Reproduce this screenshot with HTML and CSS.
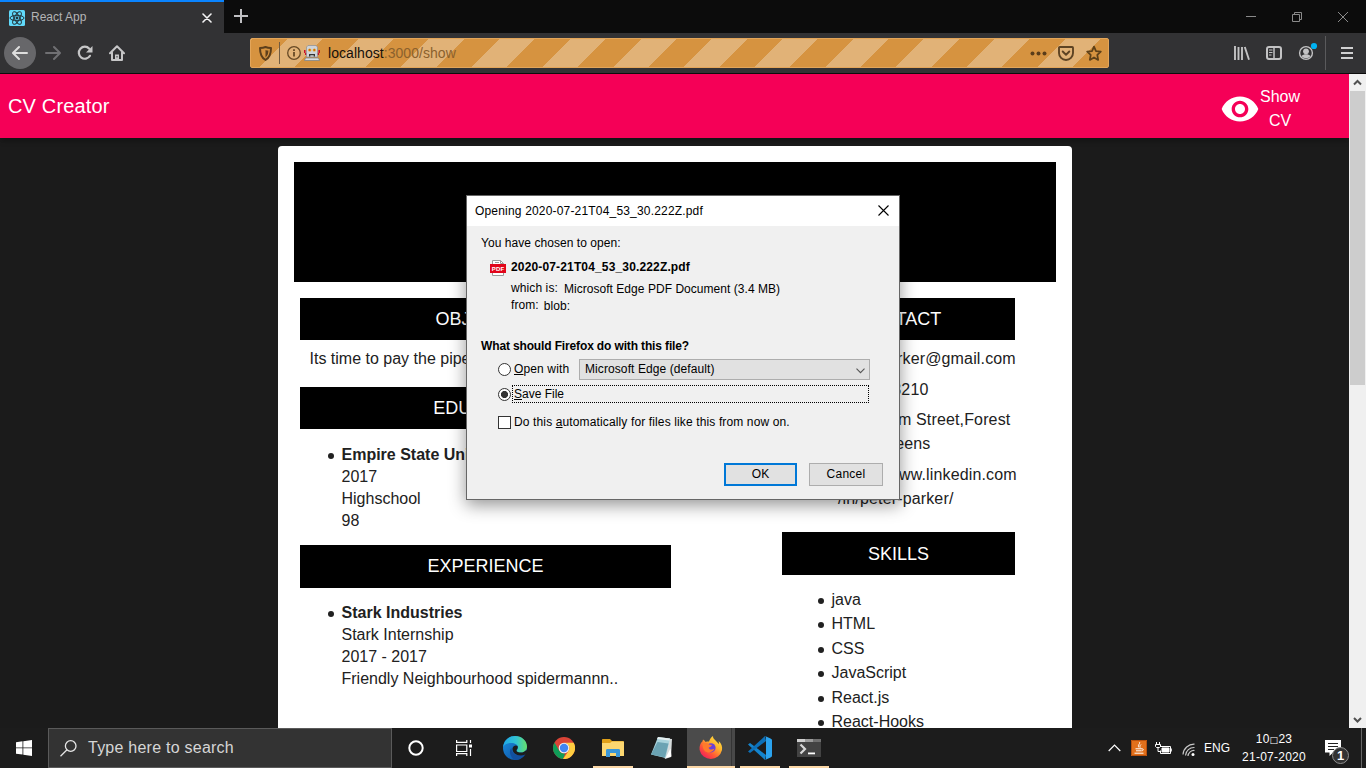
FILE: index.html
```html
<!DOCTYPE html>
<html lang="en">
<head>
<meta charset="utf-8">
<title>React App</title>
<link rel="stylesheet" href="styles.css">
</head>
<body>
<div class="screen">
  <header class="tabstrip">
    <div class="tab">
      <svg class="favicon" width="16" height="16" viewBox="0 0 16 16"><rect width="16" height="16" rx="1.5" fill="#61dafb"/><g fill="none" stroke="#22363d" stroke-width="1"><ellipse cx="8" cy="8" rx="7" ry="2.7"/><ellipse cx="8" cy="8" rx="7" ry="2.7" transform="rotate(60 8 8)"/><ellipse cx="8" cy="8" rx="7" ry="2.7" transform="rotate(120 8 8)"/></g><circle cx="8" cy="8" r="1.4" fill="#22363d"/></svg>
      <span class="tab-title">React App</span>
      <svg class="tab-close" width="10" height="10" viewBox="0 0 10 10"><path d="M1 1l8 8M9 1l-8 8" stroke="#f4f4f5" stroke-width="1.6" stroke-linecap="round"/></svg>
    </div>
    <svg class="newtab" width="14" height="14" viewBox="0 0 14 14"><path d="M7 0v14M0 7h14" stroke="#c0c0c3" stroke-width="2"/></svg>
    <div class="wincontrols">
      <svg width="10" height="10" viewBox="0 0 10 10"><path d="M0 4.5h10" stroke="#8a8a8a"/></svg>
      <svg width="10" height="10" viewBox="0 0 10 10" fill="none" stroke="#8a8a8a"><path d="M.5 2.5h7v7h-7zM2.5 2.500v-2h7v7h-2"/></svg>
      <svg width="10" height="10" viewBox="0 0 10 10"><path d="M0 0l10 10M10 0L0 10" stroke="#8a8a8a"/></svg>
    </div>
  </header>

  <div class="toolbar">
    <div class="back"><svg width="16" height="16" viewBox="0 0 16 16" fill="none" stroke="#dedede" stroke-width="2" stroke-linecap="round" stroke-linejoin="round"><path d="M15 8H1.500M7 2L1 8l6 6"/></svg></div>
    <svg class="fwd" width="16" height="16" viewBox="0 0 16 16" fill="none" stroke="#707073" stroke-width="2" stroke-linecap="round" stroke-linejoin="round"><path d="M1 8h13.500M9 2l6 6-6 6"/></svg>
    <svg class="reload" width="16" height="16" viewBox="0 0 16 16"><path d="M13 10.800A6 6 0 1 1 12.300 3.700" fill="none" stroke="#c6c6c7" stroke-width="2.200" stroke-linecap="round"/><path d="M15.500 1v6.500H9z" fill="#c6c6c7"/></svg>
    <svg class="home" width="16" height="16" viewBox="0 0 16 16"><path d="M1 8.300L8 1.300l7 7M3 7.500V15h10V7.500" fill="none" stroke="#c6c6c7" stroke-width="2" stroke-linejoin="round" stroke-linecap="round"/><path d="M6 9.500h4V15H6z" fill="#c6c6c7"/><path d="M7.500 11h1v1.500h-1z" fill="#323234"/></svg>
    <div class="urlbar">
      <svg class="shield" width="13" height="15" viewBox="0 0 13 15"><path d="M6.500 1C4.500 1.900 2.800 2 1 2c0 6 1 9.500 5.500 12C11 11.500 12 8 12 2c-1.800 0-3.500-.1-5.500-1z" fill="none" stroke="#5d3f1b" stroke-width="2" stroke-linejoin="round"/><path d="M6.500 4v7.400C9 9.500 9.300 7 9.400 4.500 8.300 4.500 7.500 4.400 6.500 4z" fill="#5d3f1b"/></svg>
      <span class="sep"></span>
      <svg class="info" width="14" height="14" viewBox="0 0 14 14"><circle cx="7" cy="7" r="6.300" fill="none" stroke="#674925" stroke-width="1.300"/><path d="M7 6v4.500M7 3.200v1.700" stroke="#674925" stroke-width="1.800"/></svg>
      <svg class="robot" width="16" height="16" viewBox="0 0 16 16"><path d="M0 5h1.500v3H3v2H1V8H0zM16 5h-1.500v3H13v2h2V8h1z" fill="#c8102e"/><path d="M4 .5h8l1.500 1.500v10h-11V2z" fill="#cfd3d8" stroke="#8a8e96" stroke-width=".7"/><circle cx="5.700" cy="5" r="1.600" fill="#e9a21c"/><circle cx="10.300" cy="5" r="1.600" fill="#e9a21c"/><path d="M5.200 4.500h1v1h-1zM9.800 4.500h1v1h-1z" fill="#a01010"/><path d="M5 9h6v2.500h-1.300v-1.200H6.300v1.200H5z" fill="#333"/><path d="M1.500 13h13l1 2.500H.5z" fill="#dadde0" stroke="#777c85" stroke-width=".7"/></svg>
      <span class="url"><b>localhost</b>:3000/show</span>
      <svg class="dots" width="17" height="5" viewBox="0 0 17 5" fill="#5a3d1a"><circle cx="2.500" cy="2.500" r="2"/><circle cx="8.500" cy="2.500" r="2"/><circle cx="14.500" cy="2.500" r="2"/></svg>
      <svg class="pocket" width="16" height="15" viewBox="0 0 16 15" fill="none" stroke="#5d4323" stroke-width="1.900" stroke-linecap="round" stroke-linejoin="round"><path d="M1.800 1h12.400a.8.8 0 0 1 .8.800V7A7 7 0 0 1 1 7V1.800A.8.800 0 0 1 1.800 1z"/><path d="M4.700 5.500L8 8.700l3.300-3.200"/></svg>
      <svg class="star" width="16" height="17" viewBox="0 0 17 17" fill="none" stroke="#5d4018" stroke-width="1.900" stroke-linejoin="round"><path d="M8.500 1.200l2.100 4.700 5.100.6-3.700 3.500.9 5.300-4.400-2.600-4.400 2.600.9-5.300L1.300 6.500l5.100-.6z"/></svg>
    </div>
    <svg class="library" width="16" height="14" viewBox="0 0 16 14" stroke="#c3c3c4" stroke-width="2"><path d="M1 0v14M4.500 1v13M8 1v13M10.800 1l4.200 12.700" stroke-width="1.900"/></svg>
    <svg class="sidebar" width="16" height="14" viewBox="0 0 16 14" fill="none" stroke="#c3c3c4"><rect x="1" y="1" width="14" height="12" rx="2" stroke-width="2"/><path d="M8 1v12" stroke-width="1.500"/><path d="M3 4h3.500M3 6.500h3.500M3 9h2.500"/></svg>
    <svg class="account" width="20" height="20" viewBox="0 0 20 20"><circle cx="8" cy="11" r="6.400" fill="none" stroke="#c3c3c4" stroke-width="1.400"/><circle cx="8" cy="9.300" r="2.900" fill="#c3c3c4"/><path d="M3.500 14c2-2.300 7-2.300 9 0-2 3-7 3-9 0z" fill="#c3c3c4"/><circle cx="16" cy="4" r="3.100" fill="#00b3f4"/></svg>
    <span class="tsep"></span>
    <svg class="burger" width="12" height="12" viewBox="0 0 12 12"><path d="M0 1h12M0 6h12M0 11h12" stroke="#d0d0d1" stroke-width="2"/></svg>
  </div>

  <div class="viewport">
    <div class="page">
      <nav class="appbar">
        <span class="brand">CV Creator</span>
        <svg width="40" height="40" viewBox="0 0 24 24" fill="#fff"><path d="M12 4.500C7 4.500 2.730 7.610 1 12c1.730 4.390 6 7.500 11 7.500s9.270-3.110 11-7.500c-1.730-4.390-6-7.500-11-7.500zM12 17c-2.760 0-5-2.240-5-5s2.240-5 5-5 5 2.240 5 5-2.240 5-5 5zm0-8c-1.660 0-3 1.340-3 3s1.340 3 3 3 3-1.340 3-3-1.340-3-3-3z"/></svg>
        <span class="show">Show CV</span>
      </nav>
      <main class="card">
        <div class="banner"></div>
        <div class="columns">
          <div class="left">
            <h2>OBJECTIVE</h2>
            <p class="objective">Its time to pay the piper</p>
            <h2>EDUCATION</h2>
            <ul class="entries edu"><li><strong>Empire State University</strong><br>2017<br>Highschool<br>98</li></ul>
            <h2 class="tall">EXPERIENCE</h2>
            <ul class="entries"><li><strong>Stark Industries</strong><br>Stark Internship<br>2017 - 2017<br>Friendly Neighbourhood spidermannn..</li></ul>
          </div>
          <div class="right">
            <h2>CONTACT</h2>
            <div class="contact">
              <p>peter.parker@gmail.com</p>
              <p>9876543210</p>
              <p>20 Ingram Street,Forest<br>Hills,Queens</p>
              <p>https://www.linkedin.com<br>/in/peter-parker/</p>
            </div>
            <h2 class="tall low">SKILLS</h2>
            <ul class="skills"><li>java</li><li>HTML</li><li>CSS</li><li>JavaScript</li><li>React.js</li><li>React-Hooks</li></ul>
          </div>
        </div>
      </main>
    </div>
    <div class="scrollbar">
      <svg width="17" height="17" viewBox="0 0 17 17"><path d="M5 10.500L8.500 7l3.500 3.500" fill="none" stroke="#505050" stroke-width="2"/></svg>
      <div class="thumb"></div>
      <svg class="down" width="17" height="17" viewBox="0 0 17 17"><path d="M5 7l3.500 3.500L12 7" fill="none" stroke="#505050" stroke-width="2"/></svg>
    </div>
  </div>

  <footer class="taskbar">
    <div class="start"><svg width="16" height="16" viewBox="0 0 16 16" fill="#fff"><path d="M0 2.200l6.500-.9v6.200H0zM7.300 1.200L16 0v7.500H7.300zM0 8.300h6.500v6.300L0 13.700zM7.300 8.300H16V16l-8.700-1.200z"/></svg></div>
    <div class="search">
      <svg width="17" height="17" viewBox="0 0 17 17" fill="none" stroke="#e6e6e6" stroke-width="1.300"><circle cx="10.700" cy="6" r="5.300"/><path d="M7 9.800L.5 16.300"/></svg>
      <span>Type here to search</span>
    </div>
    <div class="sys"><svg width="16" height="16" viewBox="0 0 16 16"><circle cx="8" cy="8" r="6.700" fill="none" stroke="#fff" stroke-width="2"/></svg></div>
    <div class="sys"><svg width="18" height="16" viewBox="0 0 18 16" fill="none" stroke="#fff" stroke-width="1.200"><path d="M1.600 0v2.400h10.200V0M1.600 5h10.200v6.500H1.600zM1.600 16v-2.400h10.200V16M15.500 0v3M15.500 9v7"/><path d="M14 4.500h3v3h-3z" fill="#fff" stroke="none"/></svg></div>
    <div class="app first"><svg width="24" height="24" viewBox="0 0 24 24"><defs><linearGradient id="e1" x1="0" x2="1"><stop offset="0" stop-color="#1ea7e8"/><stop offset=".55" stop-color="#32c3d2"/><stop offset="1" stop-color="#66e06a"/></linearGradient><linearGradient id="e2" x1="0" y1="0" x2="1" y2="1"><stop offset="0" stop-color="#1b8fe0"/><stop offset="1" stop-color="#0c4a9c"/></linearGradient></defs><circle cx="12" cy="12" r="12" fill="url(#e2)"/><path d="M0 11C1 4.500 6 0 12 0c7 0 12 5 12 10.500 0 4-3 6-6 6-2.500 0-4.500-.8-4.500-1.800 0-.8 1.500-1.300 1.500-3.200C15 8.500 11.500 7 8.500 7 4.500 7 1.500 8.500 0 11z" fill="url(#e1)"/><path d="M8.500 12c0 6 6 9 13.500 6.200C20 22 16 24 12 24 7 22 5.500 14 8.500 12z" fill="#124f9e"/><path d="M13.500 14.700c0 1 2 1.800 4.500 1.800 2 0 4-.9 5.500-2.800L24 16l-1.800 2.500C16 21 9 18 9.500 12.500 10 9.500 13 8.700 14.500 10c.9 2.500-1 3.300-1 4.700z" fill="#1c1c1c"/></svg></div>
    <div class="app"><svg width="22" height="22" viewBox="0 0 22 22"><circle cx="11" cy="11" r="11" fill="#db4437"/><path d="M1.500 5.500l4.700 8.200a5.500 5.500 0 0 0 6.100 2.500L10 22A11 11 0 0 1 1.500 5.500z" fill="#0f9d58"/><path d="M11 5.800h9.700A11 11 0 0 1 10 22l5.700-8.200A5.400 5.400 0 0 0 11 5.800z" fill="#ffcd40"/><circle cx="11" cy="11" r="5.300" fill="#f1f1f1"/><circle cx="11" cy="11" r="4.200" fill="#4285f4"/></svg></div>
    <div class="app run"><svg width="22" height="18" viewBox="0 0 22 18"><path d="M0 1c0-.6.400-1 1-1h7l2 2h11.500v5H0z" fill="#e0a019"/><path d="M0 4h8l2-1.500h12V17H0z" fill="#fcd770"/><path d="M4 18v-6.500c0-1 .5-1.500 1.500-1.500h11c1 0 1.500.500 1.500 1.500V18h-4v-4H8v4z" fill="#3a97d8"/></svg></div>
    <div class="app"><svg width="22" height="22" viewBox="0 0 22 22"><path d="M7 1l14 1-1 18-6 2z" fill="#d7dcdd"/><path d="M7 0l12 1.500L14.500 21 0 17.500z" fill="#a9d3dc"/><path d="M6.500 5l11 1.500-3.500 14L0 17.500z" fill="#6ba3b3"/><path d="M7 0l12 1.500-.5 2L6 2z" fill="#e5eff0"/><path d="M14.500 21l6-1.500-1-8z" fill="#fff"/></svg></div>
    <div class="app run active"><svg width="24" height="24" viewBox="0 0 24 24"><defs><linearGradient id="f1" x1="1" y1="0" x2=".2" y2="1"><stop offset="0" stop-color="#fff04a"/><stop offset=".4" stop-color="#ffb52d"/><stop offset=".7" stop-color="#ff5a35"/><stop offset="1" stop-color="#f0185e"/></linearGradient></defs><path d="M4 3.500c1 .5 2 1.500 2.600 2.400C8 5.400 9 5.500 10 5.500 11 3 12 1 14 0c-.3 2 1.500 3.500 3 5 1.500 1.300 2.200 2 2.700 3.200C20 7 20 6 19.600 5c3 2.500 3.900 5.500 3.400 9A11.500 11.500 0 0 1 .6 14C.2 10 1.500 7 3.400 5.600z" fill="url(#f1)"/><circle cx="12" cy="11.800" r="4.600" fill="#6a3fd8"/><path d="M3.500 8c3-1.500 5-1 6.500.4l3 .6c-.6 1.600-2 2.200-3.500 2.700 1 2.300 4 2.300 6 .9-.6 3.600-6.500 5.300-9.600 2.400C4.200 13.500 3.500 11 3.500 8z" fill="#ff7a2c"/></svg></div>
    <div class="app run"><svg width="24" height="24" viewBox="0 0 24 24"><path d="M0 8.500L2 7l16 12-1 5z" fill="#1484cd"/><path d="M0 15.500L2 17 18 5l-1-5z" fill="#0d70b8"/><path d="M17 0l5.500 2.500c1 .5 1.500 1 1.500 2v15c0 1-.5 1.500-1.500 2L17 24c.7-.5 1-1 1-2V2c0-1-.3-1.500-1-2z" fill="#2ba3ee"/></svg></div>
    <div class="app run"><svg width="24" height="18" viewBox="0 0 24 18"><path d="M0 0h24v18H0z" fill="#434343"/><path d="M0 0h8v3H0z" fill="#cfcfcf"/><path d="M8 0h8v3H8z" fill="#9b9b9b"/><path d="M16 0h8v3h-8z" fill="#707070"/><path d="M3.500 5.500L8 10l-4.500 4.500" fill="none" stroke="#d8d8d8" stroke-width="2.200"/><path d="M11 13.500h7v1.800h-7z" fill="#fff"/></svg></div>
    <div class="tray">
      <svg class="chev" width="13" height="8" viewBox="0 0 13 8"><path d="M.7 7L6.500 1.200 12.300 7" fill="none" stroke="#fff" stroke-width="1.200"/></svg>
      <svg class="java" width="16" height="16" viewBox="0 0 16 16"><path d="M0 0h16v16H0z" fill="#e2701b"/><path d="M.5.500h15v15H.5z" fill="none" stroke="#b9500c"/><path d="M8.500 2c1 2-2.500 3-.5 5.500M10 4.500c-1 1-1.500 1.500-.7 3M4.500 8.800h6.500c2 0 1.500 2-.3 2M5 10.800h5.500M3.500 13.200h9" fill="none" stroke="#fff" stroke-width="1"/></svg>
      <svg class="battery" width="17" height="13" viewBox="0 0 17 13" fill="none" stroke="#fff"><path d="M5 4.500h10.500v7h-10v-3M16.300 6.500v3"/><path d="M7 6h7v4H7z" fill="#fff"/><path d="M1.500 0v2.500M4.500 0v2.500M.5 2.500h5v2l-1 1h-3l-1-1zM3 5.500v4h2.500"/></svg>
      <svg class="wifi" width="14" height="14" viewBox="0 0 14 14" fill="none" stroke="#c9c9c9" stroke-width="1.200"><path d="M1 11.500A11 11 0 0 1 12.500 1.200M3.500 12.500a8.500 8.500 0 0 1 9-8M6 13a6 6 0 0 1 6.500-5.500"/><circle cx="11" cy="11.500" r="1.500" fill="#fff" stroke="none"/></svg>
      <span class="lang">ENG</span>
      <div class="clock"><span>10<i>□</i>23</span><span>21-07-2020</span></div>
      <svg class="notice" width="26" height="25" viewBox="0 0 26 25"><path d="M0 0h16v12.500H8L4.500 16v-3.500H0z" fill="#fff"/><path d="M3 3.500h10M3 6.500h10M3 9.500h6" stroke="#222"/><circle cx="15.500" cy="15.500" r="8" fill="#333" stroke="#8f8f8f"/><text x="12" y="20.300" class="count">1</text></svg>
      <span class="peek"></span>
    </div>
  </footer>

  <section class="dialog">
    <div class="titlebar"><span>Opening 2020-07-21T04_53_30.222Z.pdf</span><svg width="11" height="11" viewBox="0 0 11 11"><path d="M.5.500l10 10M10.500.500l-10 10" stroke="#000" stroke-width="1.100"/></svg></div>
    <div class="content">
      <div class="intro">You have chosen to open:</div>
      <div class="file"><svg width="16" height="16" viewBox="0 0 16 16"><path d="M2.500.500h8l3 3v12h-11z" fill="#fff" stroke="#9a9a9a"/><path d="M10.500.500v3h3M5 2.500h4" fill="none" stroke="#9a9a9a"/><path d="M0 4h16v9H0z" fill="#e1051a"/><text x="1.800" y="10.800" class="pdf">PDF</text></svg><strong>2020-07-21T04_53_30.222Z.pdf</strong></div>
      <div class="meta which"><span>which is:</span><span class="val">Microsoft Edge PDF Document (3.4 MB)</span></div>
      <div class="meta"><span>from:</span><span class="val">blob:</span></div>
      <div class="question">What should Firefox do with this file?</div>
      <div class="option openwith"><span class="radio"></span><label><u>O</u>pen with</label><div class="select"><span>Microsoft Edge (default)</span><svg width="9" height="6" viewBox="0 0 9 6"><path d="M.5.700l4 4 4-4" fill="none" stroke="#555" stroke-width="1.100"/></svg></div></div>
      <div class="option save"><span class="radio on"></span><div class="focus"><u>S</u>ave File</div></div>
      <div class="option auto"><span class="check"></span><label>Do this <u>a</u>utomatically for files like this from now on.</label></div>
      <div class="buttons"><div class="btn ok">OK</div><div class="btn cancel">Cancel</div></div>
    </div>
  </section>
</div>
</body>
</html>
```

FILE: styles.css
```css
* { box-sizing: border-box; }
body { margin: 0; background: #1b1b1b; font-family: "Liberation Sans", Arial, sans-serif; }
svg { display: block; flex: none; }
h2, p, ul { margin: 0; padding: 0; }
.screen { position: relative; width: 1366px; height: 768px; overflow: hidden; display: flex; flex-direction: column; }

/* Tab strip */
.tabstrip { height: 33px; background: #0c0c0c; display: flex; align-items: center; }
.tab { width: 224px; height: 33px; background: #323234; border-top: 2px solid #0a84ff; display: flex; align-items: center; padding: 0 12px 0 9px; }
.tab-title { margin-left: 6px; margin-top: -1px; flex: 1; font-size: 12px; color: #b4b4b6; }
.newtab { margin-left: 10px; margin-top: -1px; }
.wincontrols { margin-left: auto; display: flex; gap: 36px; padding-right: 18px; }

/* Navigation toolbar */
.toolbar { height: 41px; background: #323234; border-bottom: 1px solid #0c0c0c; display: flex; align-items: center; flex: none; }
.back { width: 32px; height: 32px; margin-left: 4px; border-radius: 50%; background: #67676a; display: flex; align-items: center; justify-content: center; flex: none; }
.fwd { margin-left: 9px; }
.reload { margin-left: 16px; }
.home { margin-left: 16px; }
.urlbar { margin-left: 125px; width: 859px; height: 30px; border: 1px solid #e3a559; border-radius: 2px; background: repeating-linear-gradient(-45deg, #d69340 0, #d69340 25px, #e1b277 25px, #e1b277 50px); display: flex; align-items: center; flex: none; }
.shield { margin-left: 8px; }
.sep { width: 1px; height: 22px; margin-left: 7px; background: #705a40; }
.info { margin-left: 7px; }
.robot { margin-left: 3px; }
.url { margin-left: 8px; flex: 1; font-size: 14px; letter-spacing: .05px; color: #8b612d; }
.url b { font-weight: normal; color: #15100a; }
.pocket { margin-left: 11px; }
.star { margin-left: 12px; margin-right: 6px; }
.library { margin-left: 125px; }
.sidebar { margin-left: 16px; }
.account { margin: -2px 0 0 16px; }
.tsep { width: 1px; height: 34px; margin-left: 7px; background: #5a5a5c; }
.burger { margin-left: 15px; }

/* Web page */
.viewport { height: 654px; flex: none; display: flex; overflow: hidden; }
.page { width: 1349px; height: 654px; overflow: hidden; background: #1b1b1b; }
.appbar { height: 64px; padding: 0 49px 0 8px; background: #f50057; color: #fff; display: flex; align-items: center; box-shadow: 0 2px 4px -1px rgba(0,0,0,.2), 0 4px 5px rgba(0,0,0,.14); }
.appbar svg { margin-top: 6px; }
.brand { flex: 1; font-size: 20px; letter-spacing: .15px; }
.show { width: 40px; margin-top: 5px; text-align: center; font-size: 16px; line-height: 24px; }
.card { width: 794px; height: 680px; margin: 8px 0 0 278px; padding: 16px; border-radius: 4px; background: #fff; color: #212121; }
.banner { height: 120px; background: #000; }
.columns { display: flex; justify-content: space-between; padding: 16px 41px 0 6px; }
.left { width: 371px; }
.right { width: 233px; }
h2 { height: 42px; line-height: 42px; background: #000; color: #fff; text-align: center; font-size: 18px; font-weight: normal; }
h2.tall { height: 43px; }
h2.low { line-height: 44px; }
.objective { margin-left: 9.500px; padding-top: 7px; height: 47px; font-size: 16px; line-height: 24px; }
.entries { padding: 14px 0 0 41.500px; font-size: 16px; line-height: 22px; white-space: nowrap; list-style: none; }
.entries.edu { height: 116px; padding-top: 15px; }
.entries li::before, .skills li::before { content: ""; float: left; width: 6px; height: 6px; margin: 9px 0 0 -14px; border-radius: 50%; background: #212121; }
.contact { height: 192px; padding: 7px 0 0 56px; font-size: 16px; line-height: 24px; letter-spacing: .15px; white-space: nowrap; }
.contact p { margin-bottom: 6.500px; }
.skills { padding: 13px 0 0 49.500px; font-size: 16px; line-height: 24.400px; list-style: none; }
.skills li::before { margin-top: 10px; }
.scrollbar { width: 17px; background: #f0f0f0; display: flex; flex-direction: column; }
.thumb { height: 294px; margin: 0 1px; background: #cdcdcd; }
.down { margin-top: auto; }

/* Taskbar */
.taskbar { height: 40px; flex: none; background: #1c1c1c; color: #fff; display: flex; align-items: stretch; }
.start { width: 48px; display: flex; align-items: center; justify-content: center; }
.search { width: 344px; background: #333; border: 1px solid #5a5a5a; display: flex; align-items: center; padding-left: 11px; font-size: 16px; letter-spacing: .24px; color: #d6d6d6; }
.search span { margin-left: 11px; }
.sys { width: 48px; display: flex; align-items: center; justify-content: center; }
.app { position: relative; width: 49px; display: flex; align-items: center; justify-content: center; }
.app.first { margin-left: 2px; }
.run::after { content: ""; position: absolute; left: 5px; bottom: 0; width: 40px; height: 2px; background: #fbd7a6; }
.active { background: linear-gradient(to right, #1c1c1c 1px, #4b4b4b 1px, #4b4b4b 45px, #343434 45px, #343434 46px, #484848 46px); }
.active::after { left: 1px; width: 48px; }
.tray { margin-left: auto; display: flex; align-items: center; }
.java { margin-left: 10px; }
.battery { margin-left: 8px; }
.wifi { margin-left: 10px; margin-top: 3px; }
.lang { margin-left: 8px; font-size: 12px; }
.clock { width: 66px; margin-left: 11px; display: flex; flex-direction: column; align-items: center; font-size: 12px; line-height: 18px; letter-spacing: .25px; }
.clock i { font: normal 9px/9px "DejaVu Sans", sans-serif; }
.notice { margin: 8px 0 0 18px; }
.count { font: bold 13px "Liberation Sans", sans-serif; fill: #fff; }
.peek { width: 1px; height: 40px; margin: 0 4px 0 10px; background: #666; }

/* Download dialog */
.dialog { position: absolute; left: 466px; top: 195px; width: 434px; height: 305px; border: 1px solid #666; background: #f0f0f0; box-shadow: 0 5px 16px rgba(0,0,0,.42); color: #000; font-size: 12px; line-height: 16px; }
.titlebar { height: 30px; background: #fff; display: flex; align-items: center; justify-content: space-between; padding: 0 10px 0 8px; letter-spacing: .18px; }
.titlebar svg { margin-top: -2px; }
.content { padding: 9px 16px 0 14px; }
.intro { letter-spacing: .05px; }
.file { display: flex; margin: 8px 0 0 9px; letter-spacing: .15px; }
.file svg { margin-top: 1px; }
.file strong { margin-left: 5px; }
.pdf { font: bold 6px "Liberation Sans", sans-serif; fill: #fff; }
.meta { display: flex; gap: 5px; margin: 1px 0 0 30px; letter-spacing: .08px; }
.meta.which { margin-top: 4px; letter-spacing: .1px; }
.meta.which .val { margin-left: 1px; letter-spacing: .04px; }
.val { padding-top: 1px; height: 16px; }
.question { margin-top: 25px; font-weight: bold; letter-spacing: -.14px; }
.option { display: flex; align-items: center; margin-left: 17px; letter-spacing: .13px; }
.radio { width: 13px; height: 13px; border: 1px solid #333; border-radius: 50%; background: #fff; flex: none; }
.radio.on { background: radial-gradient(circle, #333 3.200px, #fff 3.900px); }
.openwith { height: 21px; margin-top: 5px; }
.openwith label { width: 65px; margin-left: 3px; margin-top: -1px; }
.select { width: 291px; height: 21px; flex: none; border: 1px solid #adadad; background: #e1e1e1; display: flex; align-items: center; justify-content: space-between; padding: 0 4px 0 5px; letter-spacing: .09px; }
.select span { margin-top: -2px; }
.select svg { margin-top: 3px; }
.save { height: 18px; margin-top: 5px; letter-spacing: 0; }
.focus { width: 357px; height: 18px; margin-left: 1px; padding-left: 1px; border: 1px dotted #000; line-height: 16px; }
.auto { height: 16px; margin-top: 11px; }
.check { width: 13px; height: 13px; border: 1px solid #333; background: #fff; }
.auto label { margin-left: 3px; }
.buttons { display: flex; justify-content: flex-end; gap: 12px; margin-top: 33px; margin-right: -1px; padding-right: 1px; }
.btn { height: 23px; border: 1px solid #adadad; background: #e1e1e1; text-align: center; line-height: 20px; }
.ok { width: 73px; border: 2px solid #0078d7; line-height: 18px; }
.cancel { width: 74px; letter-spacing: .25px; }
```
